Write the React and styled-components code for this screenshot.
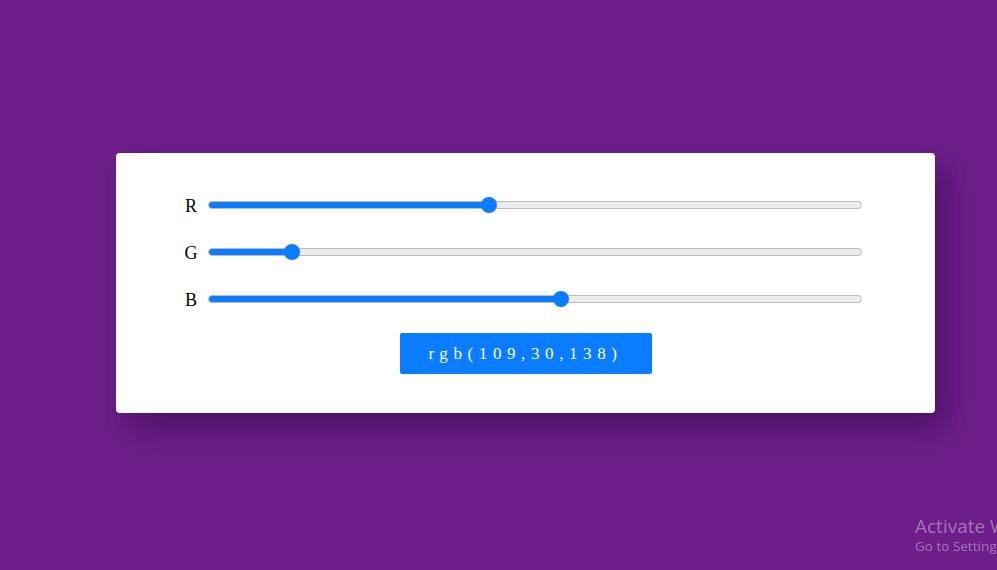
import React, { useState } from 'react';
import styled, { createGlobalStyle } from 'styled-components';

const GlobalStyle = createGlobalStyle`
  html, body {
    margin: 0;
    padding: 0;
    height: 100%;
    overflow: hidden;
  }
  body {
    background-color: rgb(109, 30, 138);
    font-family: "Liberation Serif", "Times New Roman", serif;
  }
`;

const Page = styled.div`
  height: 570px;
  padding: 153px 0 0 116px;
  box-sizing: border-box;
`;

const Card = styled.div`
  width: 819px;
  height: 260px;
  box-sizing: border-box;
  padding: 28px 0 39px;
  background: #fff;
  border-radius: 4px;
  box-shadow: 12px 16px 30px rgba(40, 0, 60, 0.45);
  display: flex;
  flex-direction: column;
  align-items: center;
`;

const Row = styled.div`
  width: 679px;
  height: 47px;
  margin-right: 6px;
  display: flex;
  align-items: center;
  gap: 9px;
`;

const Label = styled.span`
  width: 16px;
  font-size: 18px;
  color: #000;
  text-align: center;
  padding-top: 4px;
`;

const Range = styled.input`
  flex: 1;
  margin: 0;
  height: 18px;
  -webkit-appearance: none;
  appearance: none;
  background: transparent;
  cursor: pointer;

  &::-webkit-slider-runnable-track {
    height: 8px;
    border-radius: 5px;
    box-sizing: border-box;
    border: 1px solid #bcbcbc;
    background: ${(p) =>
      `linear-gradient(to right, #0a7cff 0%, #0a7cff ${p.$pct}%, #ececec ${p.$pct}%, #ececec 100%)`};
  }

  &::-webkit-slider-thumb {
    -webkit-appearance: none;
    width: 16px;
    height: 16px;
    margin-top: -5px;
    border-radius: 50%;
    background: #0a7cff;
    border: none;
  }
`;

const ColorButton = styled.button`
  margin-top: 11px;
  width: 252px;
  height: 41px;
  border: none;
  border-radius: 2px;
  background: #0a7cff;
  color: #fff;
  font-family: "Liberation Serif", "Times New Roman", serif;
  font-size: 17px;
  letter-spacing: 5.6px;
  padding: 0;
  cursor: pointer;
`;

const Watermark = styled.div`
  position: fixed;
  left: 915px;
  top: 515px;
  white-space: nowrap;
  font-family: "Open Sans", "Noto Sans", sans-serif;
  color: rgba(255, 255, 255, 0.38);
  line-height: 1.2;
`;

const WatermarkTitle = styled.div`
  font-size: 19px;
`;

const WatermarkSub = styled.div`
  font-size: 13.5px;
`;

const App = () => {
  const [rgb, setRgb] = useState({ r: 109, g: 30, b: 138 });

  const handleChange = (key) => (event) => {
    setRgb({ ...rgb, [key]: Number(event.target.value) });
  };

  const channels = [
    { key: 'r', label: 'R' },
    { key: 'g', label: 'G' },
    { key: 'b', label: 'B' },
  ];

  return (
    <>
      <GlobalStyle />
      <Page>
        <Card>
          {channels.map((c) => (
            <Row key={c.key}>
              <Label>{c.label}</Label>
              <Range
                type="range"
                min="0"
                max="255"
                value={rgb[c.key]}
                $pct={(rgb[c.key] / 255) * 100}
                onChange={handleChange(c.key)}
              />
            </Row>
          ))}
          <ColorButton>{`rgb(${rgb.r},${rgb.g},${rgb.b})`}</ColorButton>
        </Card>
      </Page>
      <Watermark>
        <WatermarkTitle>Activate Windows</WatermarkTitle>
        <WatermarkSub>Go to Settings to activate Windows.</WatermarkSub>
      </Watermark>
    </>
  );
};

export default App;
